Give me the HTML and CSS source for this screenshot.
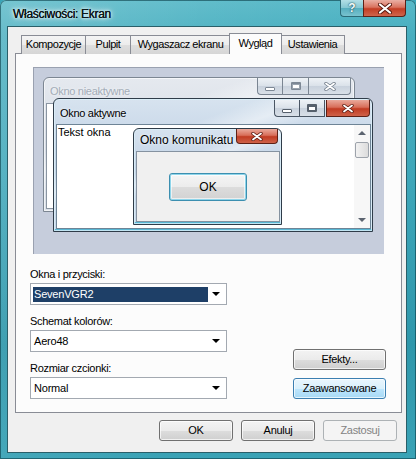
FILE: index.html
```html
<!DOCTYPE html>
<html lang="pl">
<head>
<meta charset="utf-8">
<title>Właściwości: Ekran</title>
<link rel="stylesheet" href="styles.css">
</head>
<body>
<div class="window">
  <div class="titlebar">
    <span class="title">Właściwości: Ekran</span>
    <div class="caption">
      <div class="cap-help">?</div>
      <div class="cap-close">
        <svg width="14" height="11" viewBox="0 0 14 11"><path d="M2,1.5 L12,9.5 M12,1.5 L2,9.5" stroke="#5a1a10" stroke-width="4" stroke-linecap="round"/><path d="M2,1.5 L12,9.5 M12,1.5 L2,9.5" stroke="#ffffff" stroke-width="2.2" stroke-linecap="round"/></svg>
      </div>
    </div>
  </div>
  <div class="client">
    <div class="tabs">
      <div class="tab w1">Kompozycje</div>
      <div class="tab w2">Pulpit</div>
      <div class="tab w3">Wygaszacz ekranu</div>
      <div class="tab active">Wygląd</div>
      <div class="tab w5">Ustawienia</div>
    </div>
    <div class="panel">
      <div class="preview">
        <div class="pwin inactive">
          <span class="ptitle">Okno nieaktywne</span>
          <div class="pbtns">
            <div class="pb pmin"><span class="ico-min"></span></div>
            <div class="pb pmax"><span class="ico-max"></span></div>
            <div class="pb pclose">
              <svg width="12" height="9" viewBox="0 0 12 9"><path d="M2,1.5 L10,7.5 M10,1.5 L2,7.5" stroke="#6f7a88" stroke-width="3.4" stroke-linecap="round"/><path d="M2,1.5 L10,7.5 M10,1.5 L2,7.5" stroke="#ffffff" stroke-width="1.8" stroke-linecap="round"/></svg>
            </div>
          </div>
          <div class="pbody"></div>
        </div>
        <div class="pwin active-win">
          <span class="ptitle">Okno aktywne</span>
          <div class="pbtns">
            <div class="pb pmin"><span class="ico-min"></span></div>
            <div class="pb pmax"><span class="ico-max"></span></div>
            <div class="pb pclose red">
              <svg width="12" height="9" viewBox="0 0 12 9"><path d="M2,1.5 L10,7.5 M10,1.5 L2,7.5" stroke="#5a1a10" stroke-width="3.4" stroke-linecap="round"/><path d="M2,1.5 L10,7.5 M10,1.5 L2,7.5" stroke="#ffffff" stroke-width="1.8" stroke-linecap="round"/></svg>
            </div>
          </div>
          <div class="pbody">
            <span class="ptext">Tekst okna</span>
            <div class="scroll">
              <span class="arr-up"></span>
              <span class="thumb"></span>
              <span class="arr-down"></span>
            </div>
          </div>
        </div>
        <div class="pwin msgbox">
          <span class="ptitle">Okno komunikatu</span>
          <div class="pb pclose red mclose">
            <svg width="12" height="9" viewBox="0 0 12 9"><path d="M2,1.5 L10,7.5 M10,1.5 L2,7.5" stroke="#5a1a10" stroke-width="3.4" stroke-linecap="round"/><path d="M2,1.5 L10,7.5 M10,1.5 L2,7.5" stroke="#ffffff" stroke-width="1.8" stroke-linecap="round"/></svg>
          </div>
          <div class="mbody">
            <div class="mok">OK</div>
          </div>
        </div>
      </div>
      <div class="options">
        <div class="fields">
          <div class="label first">Okna i przyciski:</div>
          <div class="combo"><span class="val sel">SevenVGR2</span><span class="arrow"></span></div>
          <div class="label">Schemat kolorów:</div>
          <div class="combo"><span class="val">Aero48</span><span class="arrow"></span></div>
          <div class="label">Rozmiar czcionki:</div>
          <div class="combo"><span class="val">Normal</span><span class="arrow"></span></div>
        </div>
        <div class="side">
          <div class="btn">Efekty...</div>
          <div class="btn default">Zaawansowane</div>
        </div>
      </div>
    </div>
    <div class="footer">
      <div class="btn fbtn">OK</div>
      <div class="btn fbtn">Anuluj</div>
      <div class="btn fbtn disabled">Zastosuj</div>
    </div>
  </div>
</div>
</body>
</html>
```

FILE: styles.css
```css
* { box-sizing: border-box; }
html, body { margin: 0; padding: 0; }
body {
  width: 416px;
  height: 459px;
  overflow: hidden;
  font-family: "Liberation Sans", Arial, sans-serif;
  font-size: 11px;
  color: #000;
  background: #3aa4b7;
}
.window {
  width: 416px;
  height: 459px;
  padding: 0 9px 6px 7px;
  display: flex;
  flex-direction: column;
  border-radius: 6px 6px 0 0;
  background:
    linear-gradient(115deg, rgba(255,255,255,0.18) 0%, rgba(255,255,255,0.05) 35%, rgba(255,255,255,0) 60%),
    linear-gradient(180deg, #58b9c8 0%, #48aebf 8%, #3ea6b9 40%, #2f97ab 75%, #3aa3b6 100%);
  box-shadow: inset 0 0 0 1px rgba(10,60,70,0.6);
}
.titlebar {
  height: 26px;
  display: flex;
  justify-content: space-between;
  align-items: flex-start;
}
.title {
  margin: 7px 0 0 6px;
  font-size: 12px;
  letter-spacing: -0.3px;
  color: #0c1a1e;
  text-shadow: 0 0 0.6px #000, 0 0 3px #fff, 0 0 5px rgba(255,255,255,0.9), 0 0 8px rgba(255,255,255,0.7);
}
.caption { display: flex; margin-right: 1px; }
.cap-help {
  width: 23px;
  height: 17px;
  border: 1px solid #2b6a76;
  border-top: none;
  border-right: none;
  border-radius: 0 0 0 4px;
  background: linear-gradient(180deg, #b2dfe6 0%, #86c8d3 48%, #56aebe 52%, #79c3cf 100%);
  color: #f4fbfc;
  font-weight: bold;
  font-size: 12px;
  line-height: 16px;
  text-align: center;
  text-shadow: 0 0 1px #1d4e58, 0 0 2px #1d4e58;
}
.cap-close {
  width: 43px;
  height: 17px;
  border: 1px solid #5e2015;
  border-top: none;
  border-radius: 0 0 4px 0;
  background: linear-gradient(180deg, #eab0a4 0%, #d9735f 45%, #c33d24 55%, #d0654c 100%);
  display: flex;
  align-items: center;
  justify-content: center;
}
.client {
  flex: 1;
  background: #f0f0f0;
  border: 1px solid #2a5f69;
  padding: 6px 4px 0 7px;
  display: flex;
  flex-direction: column;
}
.tabs {
  display: flex;
  align-items: flex-end;
  height: 21px;
  margin: 0 0 -1px 6px;
  position: relative;
  z-index: 2;
}
.tab {
  height: 19px;
  border: 1px solid #898c95;
  border-bottom: none;
  margin-left: -1px;
  background: linear-gradient(180deg, #f4f4f4 0%, #ececec 50%, #dedede 51%, #d6d6d6 100%);
  text-align: center;
  line-height: 17px;
  letter-spacing: -0.45px;
  color: #000;
}
.tab.w1 { width: 65px; margin-left: 0; }
.tab.w2 { width: 46px; }
.tab.w3 { width: 101px; }
.tab.w5 { width: 65px; margin-left: -2px; }
.tab.active {
  width: 53px;
  height: 21px;
  margin-left: -2px;
  background: #fcfcfc;
  position: relative;
  z-index: 3;
  line-height: 18px;
}
.panel {
  height: 360px;
  border: 1px solid #898c95;
  background: #fcfcfc;
  display: flex;
  flex-direction: column;
  position: relative;
  z-index: 1;
}
.preview {
  position: relative;
  margin: 13px 17px 0 17px;
  height: 187px;
  background: #c6cddc;
  box-shadow: inset 1px 1px 0 #9aa1b0;
  overflow: hidden;
}
.pwin {
  position: absolute;
  border: 1px solid #2f3c49;
  border-radius: 6px 6px 0 0;
  background:
    linear-gradient(160deg, rgba(255,255,255,0) 30%, rgba(255,255,255,0.45) 38%, rgba(255,255,255,0) 46%),
    linear-gradient(180deg, #d7e3ef 0%, #c2d3e6 40%, #c9d8e9 100%);
  box-shadow: inset 0 0 0 1px rgba(220,240,250,0.8), inset 0 -2px 0 #58b6d3;
}
.pwin.inactive {
  left: 10px; top: 10px; width: 312px; height: 135px;
  border-color: #7c8692;
  background:
    linear-gradient(160deg, rgba(255,255,255,0) 30%, rgba(255,255,255,0.4) 38%, rgba(255,255,255,0) 46%),
    linear-gradient(180deg, #e5e9ef 0%, #d6dce5 50%, #dbe1e9 100%);
  box-shadow: inset 0 0 0 1px rgba(255,255,255,0.6);
}
.pwin.active-win { left: 20px; top: 31px; width: 320px; height: 134px; }
.pwin.msgbox { left: 100px; top: 61px; width: 149px; height: 97px; }
.ptitle {
  position: absolute;
  left: 6px;
  top: 8px;
  line-height: 13px;
  font-size: 11px;
  letter-spacing: -0.3px;
  white-space: nowrap;
  color: #000;
  text-shadow: 0 0 3px rgba(255,255,255,0.9);
}
.inactive .ptitle { color: #a3acb7; top: 7px; }
.msgbox .ptitle { font-size: 12px; letter-spacing: 0; top: 5px; left: 6px; }
.pbtns {
  position: absolute;
  top: 0;
  right: 3px;
  display: flex;
}
.active-win .pbtns { top: 1px; right: 2px; }
.pb {
  height: 17px;
  border: 1px solid #7a8592;
  border-top: none;
  background: linear-gradient(180deg, #eef2f6 0%, #dbe2ea 48%, #c9d2dd 52%, #d9e0e8 100%);
  display: flex;
  align-items: center;
  justify-content: center;
}
.pmin { width: 25px; border-radius: 0 0 0 4px; border-right: none; }
.pmax { width: 27px; }
.pclose { width: 42px; border-left: none; border-radius: 0 0 4px 0; }
.active-win .pmin { width: 25px; border-color: #4a5664; }
.active-win .pmax { width: 26px; border-color: #4a5664; margin-right: 1px; }
.active-win .pclose { width: 44px; }
.pb.red {
  border: 1px solid #5e2015;
  border-top: none;
  background: linear-gradient(180deg, #eaa99b 0%, #d86e59 45%, #c13b22 55%, #cf6249 100%);
}
.ico-min {
  width: 10px; height: 4px;
  border: 1px solid #56606c;
  background: #fff;
  margin-top: 5px;
  border-radius: 1px;
}
.ico-max {
  width: 10px; height: 8px;
  border: 1px solid #56606c;
  border-top-width: 2px;
  background: #fff;
  box-shadow: inset 0 0 0 1px #56606c;
  border-radius: 1px;
}
.inactive .ico-min, .inactive .ico-max { border-color: #7d8895; box-shadow: none; }
.inactive .ico-max { box-shadow: inset 0 0 0 1px #9aa4af; }
.pbody {
  position: absolute;
  background: #fff;
  border: 1px solid #8a95a2;
}
.inactive .pbody { left: 2px; top: 25px; right: 2px; bottom: 2px; }
.active-win .pbody { left: 2px; top: 25px; right: 1px; bottom: 2px; border-color: #6e8496; }
.ptext {
  position: absolute;
  left: 1px;
  top: 1px;
  line-height: 13px;
  font-size: 11px;
}
.scroll {
  position: absolute;
  top: 0; right: 0; bottom: 0;
  width: 16px;
  background: #f7f7f7;
}
.arr-up, .arr-down {
  position: absolute;
  left: 4px;
  width: 0; height: 0;
  border-left: 4px solid transparent;
  border-right: 4px solid transparent;
}
.arr-up { top: 6px; border-bottom: 4px solid #5c6470; }
.arr-down { bottom: 6px; border-top: 4px solid #5c6470; }
.thumb {
  position: absolute;
  left: 1px; top: 17px;
  width: 14px; height: 16px;
  border: 1px solid #9da3ab;
  border-radius: 2px;
  background: linear-gradient(90deg, #f2f2f2, #dcdcdc);
}
.mclose { position: absolute; top: 0; right: 3px; width: 42px; height: 15px; border-left: 1px solid #5e2015; border-radius: 0 0 4px 4px; }
.mbody {
  position: absolute;
  left: 2px; top: 22px; right: 1px; bottom: 2px;
  background: #f0f0f0;
  border: 1px solid #8592a0;
  display: flex;
  justify-content: center;
  align-items: flex-start;
  padding-top: 21px;
}
.mok {
  width: 78px;
  height: 28px;
  border: 1px solid #3c8fb0;
  border-radius: 3px;
  background: linear-gradient(180deg, #f5f5f5 0%, #ececec 50%, #dcdcdc 51%, #d2d2d2 100%);
  box-shadow: inset 0 0 0 1px #8fd5ea, inset 0 0 0 2px rgba(255,255,255,0.6);
  font-size: 12px;
  line-height: 26px;
  text-align: center;
}
.options {
  display: flex;
  justify-content: space-between;
  align-items: flex-end;
  padding: 0 15px 0 14px;
}
.fields { width: 197px; display: flex; flex-direction: column; }
.label {
  line-height: 13px;
  letter-spacing: -0.3px;
  margin-top: 10px;
}
.label.first { margin-top: 14px; }
.combo {
  margin-top: 2px;
  height: 22px;
  border: 1px solid #a3a9b1;
  background: #fff;
  display: flex;
  align-items: center;
  justify-content: space-between;
  padding: 0 6px 0 2px;
}
.val {
  line-height: 15px;
  padding-left: 1px;
  letter-spacing: -0.2px;
  width: 175px;
}
.val.sel { background: #1e3f67; color: #fff; }
.arrow {
  width: 0; height: 0;
  border-left: 4px solid transparent;
  border-right: 4px solid transparent;
  border-top: 4px solid #000;
}
.side { display: flex; flex-direction: column; gap: 8px; width: 93px; }
.btn {
  height: 21px;
  border: 1px solid #707070;
  border-radius: 3px;
  background: linear-gradient(180deg, #f3f3f3 0%, #ebebeb 50%, #dddddd 51%, #cfcfcf 100%);
  box-shadow: inset 0 0 0 1px rgba(255,255,255,0.7);
  text-align: center;
  line-height: 19px;
  letter-spacing: -0.3px;
}
.btn.default {
  border-color: #3c7fb1;
  background: linear-gradient(180deg, #eaf6fd 0%, #d9f0fc 50%, #bee6fd 51%, #a7d9f5 100%);
}
.footer {
  margin-top: 7px;
  display: flex;
  justify-content: flex-end;
  gap: 8px;
  padding-right: 5px;
}
.fbtn { width: 74px; }
.btn.disabled {
  border-color: #adb2b5;
  background: #f4f4f4;
  color: #838383;
  box-shadow: none;
}
```
